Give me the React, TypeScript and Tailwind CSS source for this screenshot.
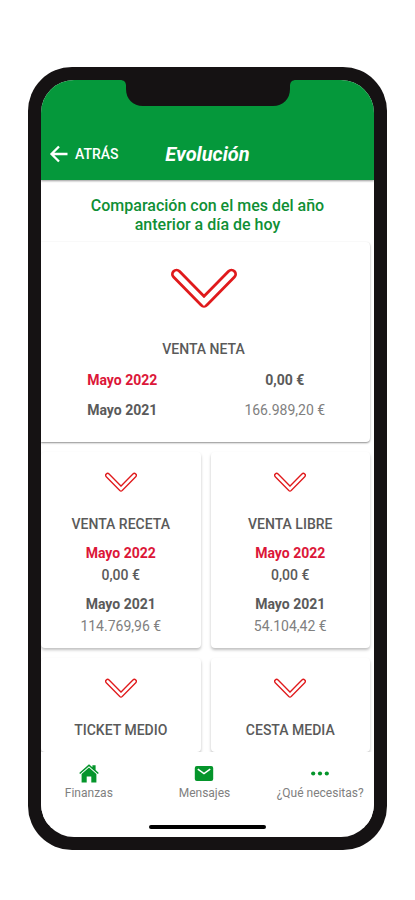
import type { ReactNode } from "react";

interface Metric {
  label: string;
  current?: string;
  previous?: string;
}

const CURRENT_MONTH = "Mayo 2022";
const PREVIOUS_MONTH = "Mayo 2021";

const metrics: Metric[] = [
  { label: "VENTA RECETA", current: "0,00 €", previous: "114.769,96 €" },
  { label: "VENTA LIBRE", current: "0,00 €", previous: "54.104,42 €" },
  { label: "TICKET MEDIO" },
  { label: "CESTA MEDIA" },
];

function TrendDown({ className }: { className: string }) {
  return (
    <svg viewBox="0 0 66 40" className={className} fill="none" strokeLinecap="round" aria-hidden="true">
      <path d="M5.5 6.2 33 34.2 60.5 6.2" stroke="#e01a1c" strokeWidth="11" strokeLinejoin="round" />
      <path d="M5.5 6.2 33 34.2 60.5 6.2" stroke="#fff" strokeWidth="5.4" strokeLinejoin="miter" />
    </svg>
  );
}

function Notch() {
  return (
    <svg viewBox="0 0 176 27" className="absolute top-0 left-1/2 z-20 h-[27px] w-[176px] -translate-x-1/2" aria-hidden="true">
      <path
        d="M0 0C4 0 6 2 6 6V9C6 19 13 26 23 26H153C163 26 170 19 170 9V6C170 2 172 0 176 0Z"
        fill="#151213"
      />
    </svg>
  );
}

function HomeIcon() {
  return (
    <svg viewBox="0 0 20 19" className="h-[19px] w-5" fill="#05952b" aria-hidden="true">
      <path d="M10 3.6 2.6 10.1V18.6H7.7V12.4H12.3V18.6H17.4V10.1Z" />
      <path d="M10 .2 13.4 3.2V1.2H16.6V6L19.8 8.9 18.8 10 10 2.3 1.2 10 .2 8.9Z" />
    </svg>
  );
}

function MailIcon() {
  return (
    <svg viewBox="0 0 20 19" className="h-[19px] w-5" aria-hidden="true">
      <rect x=".8" y="2" width="18.4" height="15" rx="2" fill="#05952b" />
      <path d="M3.8 5.2 10 9.6 16.2 5.2" fill="none" stroke="#fff" strokeWidth="1.6" />
    </svg>
  );
}

function DotsIcon() {
  return (
    <svg viewBox="0 0 20 19" className="h-[19px] w-5" fill="#05952b" aria-hidden="true">
      <circle cx="3.2" cy="9.5" r="2.1" />
      <circle cx="10" cy="9.5" r="2.1" />
      <circle cx="16.8" cy="9.5" r="2.1" />
    </svg>
  );
}

function NavItem({ label, children }: { label: string; children: ReactNode }) {
  return (
    <a href="#" className="flex flex-col items-center gap-0.5 text-xs leading-4 whitespace-nowrap text-[#808080]">
      {children}
      {label}
    </a>
  );
}

function MetricCard({ metric }: { metric: Metric }) {
  return (
    <article className="flex flex-col items-center rounded-sm bg-white pt-5 pb-3 text-center text-sm leading-5 text-[#5a5a5a] shadow-[0_2px_3px_rgba(0,0,0,0.25)]">
      <TrendDown className="h-5 w-8" />
      <h2 className="mt-[22px] font-medium">{metric.label}</h2>
      {metric.current ? (
        <>
          <p className="mt-[9px] font-bold text-[#dc1638]">{CURRENT_MONTH}</p>
          <p className="mt-0.5 font-medium">{metric.current}</p>
          <p className="mt-[9px] font-bold">{PREVIOUS_MONTH}</p>
          <p className="mt-0.5 text-[#808080]">{metric.previous}</p>
        </>
      ) : null}
    </article>
  );
}

export default function App() {
  return (
    <div className="bg-white px-7 py-[67px] font-['Roboto','Liberation_Sans',sans-serif]">
      <div className="rounded-[44px] bg-[#151213] p-[13px]">
        <div className="relative overflow-hidden rounded-[33px] bg-white">
          <Notch />

          <header className="relative z-10 grid h-[100px] grid-cols-[1fr_auto_1fr] items-center bg-[#05983b] px-2 pt-12 shadow-[0_1px_2px_rgba(0,0,0,0.4)]">
            <button type="button" className="flex items-center gap-1.5 text-sm font-medium text-white">
              <svg viewBox="0 0 20 18" className="h-[18px] w-5" fill="none" stroke="currentColor" strokeWidth="2.3" aria-hidden="true">
                <path d="M18.5 9H3M10 1.5 2.5 9 10 16.5" />
              </svg>
              ATRÁS
            </button>
            <h1 className="text-xl leading-6 font-bold text-white italic">Evolución</h1>
          </header>

          <p className="px-10 pt-4 pb-2 text-center text-base leading-[19px] font-medium text-[#0f8f35]">
            Comparación con el mes del año anterior a día de hoy
          </p>

          <main>
            <article className="mr-1 flex flex-col items-center rounded-r-sm bg-white pt-[26px] pr-1 pb-[22px] text-sm leading-5 text-[#5a5a5a] shadow-[0_1px_2px_rgba(0,0,0,0.45)]">
              <TrendDown className="h-10 w-[66px]" />
              <h2 className="mt-[31px] font-medium">VENTA NETA</h2>
              <div className="mt-[11px] grid w-full grid-cols-2 gap-y-2.5 text-center">
                <p className="font-bold text-[#dc1638]">{CURRENT_MONTH}</p>
                <p className="font-bold">0,00 €</p>
                <p className="font-bold">{PREVIOUS_MONTH}</p>
                <p className="text-[#808080]">166.989,20 €</p>
              </div>
            </article>

            <div className="mt-2.5 mr-1 grid grid-cols-2 gap-2.5">
              {metrics.map((metric) => (
                <MetricCard key={metric.label} metric={metric} />
              ))}
            </div>
          </main>

          <nav className="relative -mr-1 -ml-2.5 grid grid-cols-3 bg-white pt-3 pb-6">
            <NavItem label="Finanzas">
              <HomeIcon />
            </NavItem>
            <NavItem label="Mensajes">
              <MailIcon />
            </NavItem>
            <NavItem label="¿Qué necesitas?">
              <DotsIcon />
            </NavItem>
          </nav>
          <div className="mx-auto mb-2 h-1 w-[117px] rounded-full bg-black" />
        </div>
      </div>
    </div>
  );
}
